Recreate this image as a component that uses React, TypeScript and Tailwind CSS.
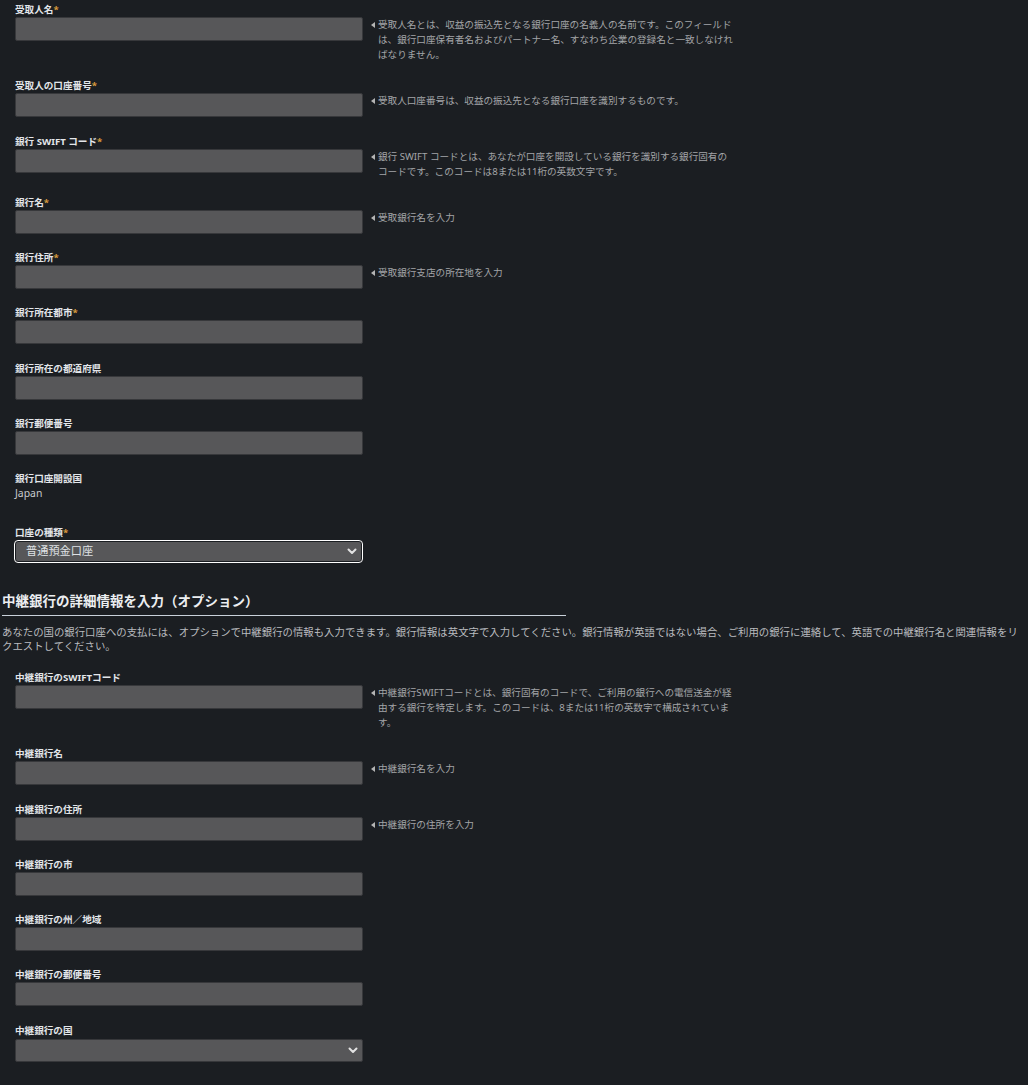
import React from 'react';

type Field = {
  label: string;
  required?: boolean;
  hint?: string;
};

const bankFields: Field[] = [
  {
    label: '受取人名',
    required: true,
    hint: '受取人名とは、収益の振込先となる銀行口座の名義人の名前です。このフィールドは、銀行口座保有者名およびパートナー名、すなわち企業の登録名と一致しなければなりません。',
  },
  {
    label: '受取人の口座番号',
    required: true,
    hint: '受取人口座番号は、収益の振込先となる銀行口座を識別するものです。',
  },
  {
    label: '銀行 SWIFT コード',
    required: true,
    hint: '銀行 SWIFT コードとは、あなたが口座を開設している銀行を識別する銀行固有のコードです。このコードは8または11桁の英数文字です。',
  },
  { label: '銀行名', required: true, hint: '受取銀行名を入力' },
  { label: '銀行住所', required: true, hint: '受取銀行支店の所在地を入力' },
  { label: '銀行所在都市', required: true },
  { label: '銀行所在の都道府県' },
  { label: '銀行郵便番号' },
];

const intermediaryFields: Field[] = [
  {
    label: '中継銀行のSWIFTコード',
    hint: '中継銀行SWIFTコードとは、銀行固有のコードで、ご利用の銀行への電信送金が経由する銀行を特定します。このコードは、8または11桁の英数字で構成されています。',
  },
  { label: '中継銀行名', hint: '中継銀行名を入力' },
  { label: '中継銀行の住所', hint: '中継銀行の住所を入力' },
  { label: '中継銀行の市' },
  { label: '中継銀行の州／地域' },
  { label: '中継銀行の郵便番号' },
];

function Label({ text, required }: { text: string; required?: boolean }) {
  return (
    <div className="text-[9.6px] leading-[15px] font-bold text-[#e3e6ea]">
      {text}
      {required && <span className="text-[#d99a3c]">*</span>}
    </div>
  );
}

function Chevron() {
  return (
    <svg width="10" height="7" viewBox="0 0 10 7" className="text-[#e2e2e2]">
      <polyline points="1.5,1.5 5,5 8.5,1.5" fill="none" stroke="currentColor" strokeWidth="2" strokeLinecap="round" strokeLinejoin="round" />
    </svg>
  );
}

function TextField({ field }: { field: Field }) {
  return (
    <div className="mb-[16.25px]">
      <Label text={field.label} required={field.required} />
      <div className="flex items-start">
        <input
          type="text"
          className="w-[348px] h-[24px] shrink-0 bg-[#575759] border border-[#37383b] rounded-[2px] outline-none"
        />
        {field.hint && (
          <div className="flex items-start ml-[8px]">
            <svg width="4" height="6" viewBox="0 0 4 6" className="mt-[5px] shrink-0 text-[#b5b5b5]">
              <polygon points="4,0 0,3 4,6" fill="currentColor" />
            </svg>
            <p className="ml-[3px] w-[358px] text-[9.6px] leading-[15px] text-[#a3a5a8]">{field.hint}</p>
          </div>
        )}
      </div>
    </div>
  );
}

export default function App() {
  return (
    <div className="min-h-screen bg-[#1b1e22] font-['Noto_Sans','Noto_Sans_CJK_JP',sans-serif] pt-[2px] pb-6">
      {/* Bank account details */}
      <div className="pl-[15px]">
        {bankFields.map((f) => (
          <TextField key={f.label} field={f} />
        ))}

        <div className="mb-6">
          <Label text="銀行口座開設国" />
          <div className="text-[10.4px] leading-[15px] text-[#c9cbce]">Japan</div>
        </div>

        <div>
          <Label text="口座の種類" required />
          <div className="w-[349px] h-[23px] -ml-px rounded-[4px] border border-white p-px bg-[#1b1e22]">
            <div className="h-full rounded-[2px] bg-[#575759] flex items-center justify-between pl-[10px] pr-[4px]">
              <span className="text-[11.2px] text-[#dfe1e4]">普通預金口座</span>
              <Chevron />
            </div>
          </div>
        </div>
      </div>

      {/* Intermediary bank section */}
      <div className="mt-[29px] px-[2px]">
        <h2 className="w-[564px] pb-[5px] border-b border-[#c9d1da] text-[13.5px] leading-[18px] font-bold text-[#eceef1]">
          中継銀行の詳細情報を入力（オプション）
        </h2>
        <p className="mt-[9px] pr-[2px] text-[10.4px] leading-[14px] text-[#b9bbbf]">
          あなたの国の銀行口座への支払には、オプションで中継銀行の情報も入力できます。銀行情報は英文字で入力してください。銀行情報が英語ではない場合、ご利用の銀行に連絡して、英語での中継銀行名と関連情報をリクエストしてください。
        </p>
      </div>

      <div className="pl-[15px] mt-[17px]">
        {intermediaryFields.map((f) => (
          <TextField key={f.label} field={f} />
        ))}

        <div>
          <Label text="中継銀行の国" />
          <div className="mt-px w-[348px] h-[23px] rounded-[2px] border border-[#37383b] bg-[#575759] flex items-center justify-end pr-[4px]">
            <Chevron />
          </div>
        </div>
      </div>
    </div>
  );
}
